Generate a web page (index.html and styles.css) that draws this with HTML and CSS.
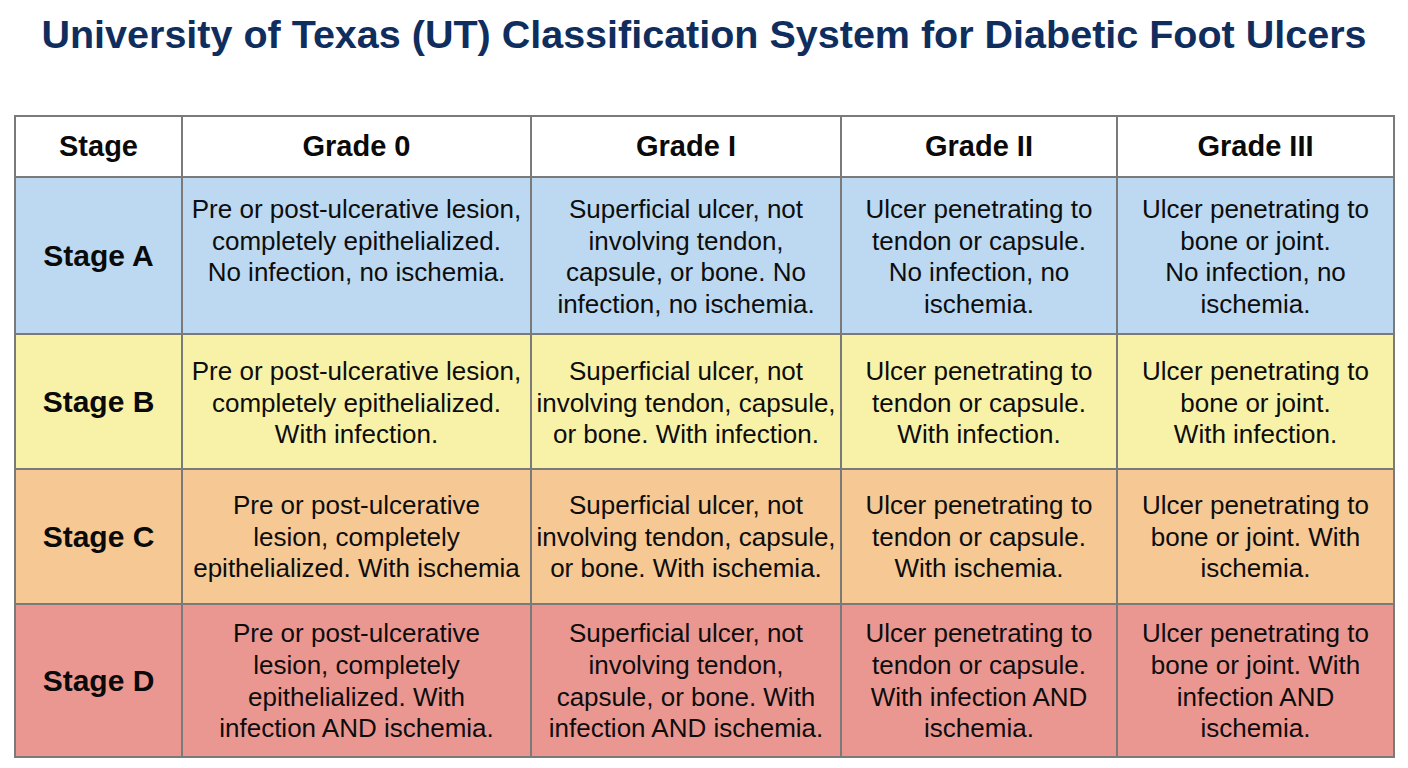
FILE: index.html
```html
<!DOCTYPE html>
<html>
<head>
<meta charset="utf-8">
<link rel="stylesheet" href="styles.css">
</head>
<body>
<h1 class="title">University of Texas (UT) Classification System for Diabetic Foot Ulcers</h1>
<table class="ut">
<colgroup>
<col class="c0"><col class="c1"><col class="c2"><col class="c3"><col class="c4">
</colgroup>
<thead>
<tr class="head"><th>Stage</th><th>Grade 0</th><th>Grade I</th><th>Grade II</th><th>Grade III</th></tr>
</thead>
<tbody>
<tr class="row-a">
<th>Stage A</th>
<td>Pre or post-ulcerative lesion,<br>completely epithelialized.<br>No infection, no ischemia.</td>
<td>Superficial ulcer, not<br>involving tendon,<br>capsule, or bone. No<br>infection, no ischemia.</td>
<td>Ulcer penetrating to<br>tendon or capsule.<br>No infection, no<br>ischemia.</td>
<td>Ulcer penetrating to<br>bone or joint.<br>No infection, no<br>ischemia.</td>
</tr>
<tr class="row-b">
<th>Stage B</th>
<td>Pre or post-ulcerative lesion,<br>completely epithelialized.<br>With infection.</td>
<td>Superficial ulcer, not<br>involving tendon, capsule,<br>or bone. With infection.</td>
<td>Ulcer penetrating to<br>tendon or capsule.<br>With infection.</td>
<td>Ulcer penetrating to<br>bone or joint.<br>With infection.</td>
</tr>
<tr class="row-c">
<th>Stage C</th>
<td>Pre or post-ulcerative<br>lesion, completely<br>epithelialized. With ischemia</td>
<td>Superficial ulcer, not<br>involving tendon, capsule,<br>or bone. With ischemia.</td>
<td>Ulcer penetrating to<br>tendon or capsule.<br>With ischemia.</td>
<td>Ulcer penetrating to<br>bone or joint. With<br>ischemia.</td>
</tr>
<tr class="row-d">
<th>Stage D</th>
<td>Pre or post-ulcerative<br>lesion, completely<br>epithelialized. With<br>infection AND ischemia.</td>
<td>Superficial ulcer, not<br>involving tendon,<br>capsule, or bone. With<br>infection AND ischemia.</td>
<td>Ulcer penetrating to<br>tendon or capsule.<br>With infection AND<br>ischemia.</td>
<td>Ulcer penetrating to<br>bone or joint. With<br>infection AND<br>ischemia.</td>
</tr>
</tbody>
</table>
</body>
</html>
```
FILE: styles.css
```css
html, body {
  margin: 0;
  padding: 0;
  background: #ffffff;
}
body {
  font-family: "Liberation Sans", Arial, sans-serif;
  color: #111111;
}
.title {
  margin: 0;
  padding-top: 10px;
  height: 115px;
  box-sizing: border-box;
  text-align: center;
  font-size: 39.5px;
  font-weight: bold;
  color: #0f2e5e;
  line-height: 48px;
}
.ut {
  margin-left: 14px;
  width: 1379px;
  border-collapse: collapse;
  table-layout: fixed;
}
.c0 { width: 167px; }
.c1 { width: 349px; }
.c2 { width: 310px; }
.c3 { width: 276px; }
.c4 { width: 277px; }
.ut th, .ut td {
  border: 2px solid #7a7a7a;
  text-align: center;
  vertical-align: middle;
  padding: 0;
  white-space: nowrap;
}
.ut td {
  font-size: 26px;
  line-height: 31.6px;
  color: #0d0d0d;
}
.ut th {
  font-size: 30px;
  font-weight: bold;
  color: #0a0a0a;
}
.ut thead th {
  font-size: 29px;
}
.head { height: 61px; background: #ffffff; }
.row-a { height: 157px; background: #bcd9f1; }
.row-a td { vertical-align: top; padding-top: 16px; }
.row-b { height: 135px; background: #f8f2a9; }
.row-b td { padding-top: 4px; }
.row-c { height: 135px; background: #f6c893; }
.row-c td, .row-d td { padding-top: 2px; }
.row-d { height: 153px; background: #eb9791; }
```
